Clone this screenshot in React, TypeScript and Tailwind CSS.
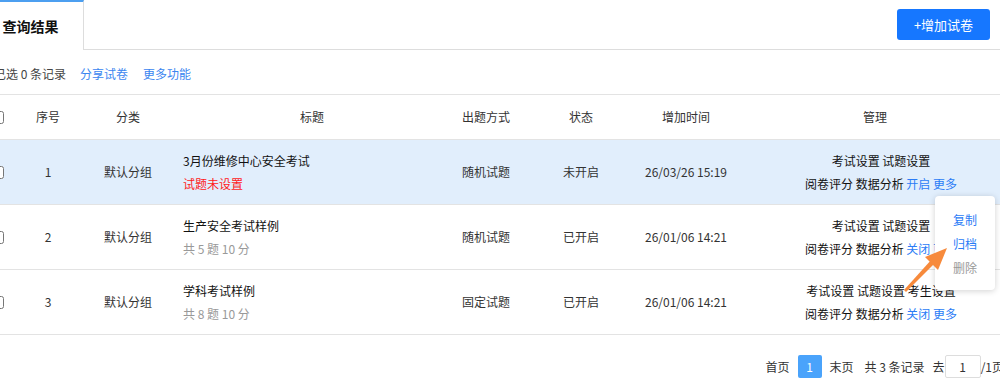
import React from "react";

type Row = {
  no: number;
  cat: string;
  title: string;
  sub: string;
  subRed?: boolean;
  mode: string;
  status: string;
  time: string;
  line1: string[];
  toggle: string;
  bg?: boolean;
};

const rows: Row[] = [
  {
    no: 1,
    cat: "默认分组",
    title: "3月份维修中心安全考试",
    sub: "试题未设置",
    subRed: true,
    mode: "随机试题",
    status: "未开启",
    time: "26/03/26 15:19",
    line1: ["考试设置", "试题设置"],
    toggle: "开启",
    bg: true,
  },
  {
    no: 2,
    cat: "默认分组",
    title: "生产安全考试样例",
    sub: "共 5 题 10 分",
    mode: "随机试题",
    status: "已开启",
    time: "26/01/06 14:21",
    line1: ["考试设置", "试题设置"],
    toggle: "关闭",
  },
  {
    no: 3,
    cat: "默认分组",
    title: "学科考试样例",
    sub: "共 8 题 10 分",
    mode: "固定试题",
    status: "已开启",
    time: "26/01/06 14:21",
    line1: ["考试设置", "试题设置", "考生设置"],
    toggle: "关闭",
  },
];

const cols = "grid grid-cols-[46px_56px_104px_264px_84px_106px_104px_274px]";

export default function App() {
  return (
    <div
      className="relative w-[1000px] h-[388px] overflow-hidden bg-white text-[12px] text-[#333]"
      style={{ fontFamily: '"Noto Sans CJK SC", "Noto Sans", sans-serif' }}
    >
      <div className="-ml-[26px] w-[1038px]">
        {/* Tabs header */}
        <div className="flex h-[50px]">
          <div className="w-[110px] h-[50px] border-t-2 border-[#4c9ff0] border-r border-r-[#dddddd] bg-white flex items-center justify-center pl-[4px] text-[14px] font-bold text-[#111]">
            查询结果
          </div>
          <div className="flex-1 h-[50px] border-b border-[#dddddd] flex items-center justify-end pr-[22px]">
            <button className="w-[93px] h-[31px] rounded-[3px] bg-[#1677ff] text-white text-[13px] flex items-center justify-center">
              +增加试卷
            </button>
          </div>
        </div>

        {/* Toolbar */}
        <div className="h-[45px] border-b border-[#e3e3e3] flex items-center pl-[20px] pt-[4px]">
          <span className="mr-[14px] text-[#444]">已选&nbsp;0&nbsp;条记录</span>
          <span className="mr-[15px] text-[#3b86f0]">分享试卷</span>
          <span className="text-[#3b86f0]">更多功能</span>
        </div>

        {/* Table header */}
        <div className={`${cols} h-[45px] border-b border-[#e3e3e3] items-center text-[#333]`}>
          <div className="flex justify-center">
            <input type="checkbox" className="w-[13px] h-[13px] m-0" readOnly />
          </div>
          <div className="text-center">序号</div>
          <div className="text-center">分类</div>
          <div className="text-center">标题</div>
          <div className="text-center">出题方式</div>
          <div className="text-center">状态</div>
          <div className="text-center">增加时间</div>
          <div className="text-center">管理</div>
        </div>

        {/* Rows */}
        {rows.map((r) => (
          <div
            key={r.no}
            className={`${cols} h-[65px] border-b border-[#e3e3e3] items-center ${r.bg ? "bg-[#e1eefc]" : "bg-white"}`}
          >
            <div className="flex justify-center">
              <input type="checkbox" className="w-[13px] h-[13px] m-0" readOnly />
            </div>
            <div className="text-center">{r.no}</div>
            <div className="text-center">{r.cat}</div>
            <div className="pl-[3px] flex flex-col">
              <span className="leading-[23px] text-[#111]">{r.title}</span>
              <span className={`leading-[23px] ${r.subRed ? "text-[#ff1a1a]" : "text-[#999]"}`}>{r.sub}</span>
            </div>
            <div className="text-center">{r.mode}</div>
            <div className="text-center">{r.status}</div>
            <div className="text-center">{r.time}</div>
            <div className="pl-[12px] flex flex-col items-center">
              <span className="leading-[23px] text-[#111]">{r.line1.join(" ")}</span>
              <span className="leading-[23px] text-[#111]">
                阅卷评分 数据分析 <span className="text-[#2b7cf6]">{r.toggle}</span>{" "}
                <span className="text-[#2b7cf6]">更多</span>
              </span>
            </div>
          </div>
        ))}

        {/* Pagination */}
        <div className="flex justify-end items-center pt-[20px] pr-[8px] h-[43px] text-[#333]">
          <span>首页</span>
          <span className="ml-[8px] w-[24px] h-[23px] rounded-[2px] bg-[#4aa3fb] text-white flex items-center justify-center">1</span>
          <span className="ml-[8px]">末页</span>
          <span className="ml-[11px]">共&nbsp;3&nbsp;条记录</span>
          <span className="ml-[8px]">去</span>
          <span className="w-[36px] h-[23px] border border-[#dddddd] rounded-[2px] flex items-center justify-center">1</span>
          <span>/1页</span>
        </div>
      </div>

      {/* More popup */}
      <div className="absolute left-[935px] top-[196px] w-[60px] h-[94px] bg-white rounded-[4px] shadow-[0_1px_6px_rgba(0,0,0,0.18)] flex flex-col items-center pt-[12px]">
        <span className="leading-[24px] text-[#2b7cf6]">复制</span>
        <span className="leading-[24px] text-[#2b7cf6]">归档</span>
        <span className="leading-[24px] text-[#999]">删除</span>
      </div>

      {/* Annotation arrow */}
      <svg className="absolute left-0 top-0 pointer-events-none" width="1000" height="388">
        <polygon points="904,290 906,292 936,262 932,259" fill="#f78a3c" />
        <polygon points="947,248 925,257 938,270" fill="#f78a3c" />
      </svg>
    </div>
  );
}
